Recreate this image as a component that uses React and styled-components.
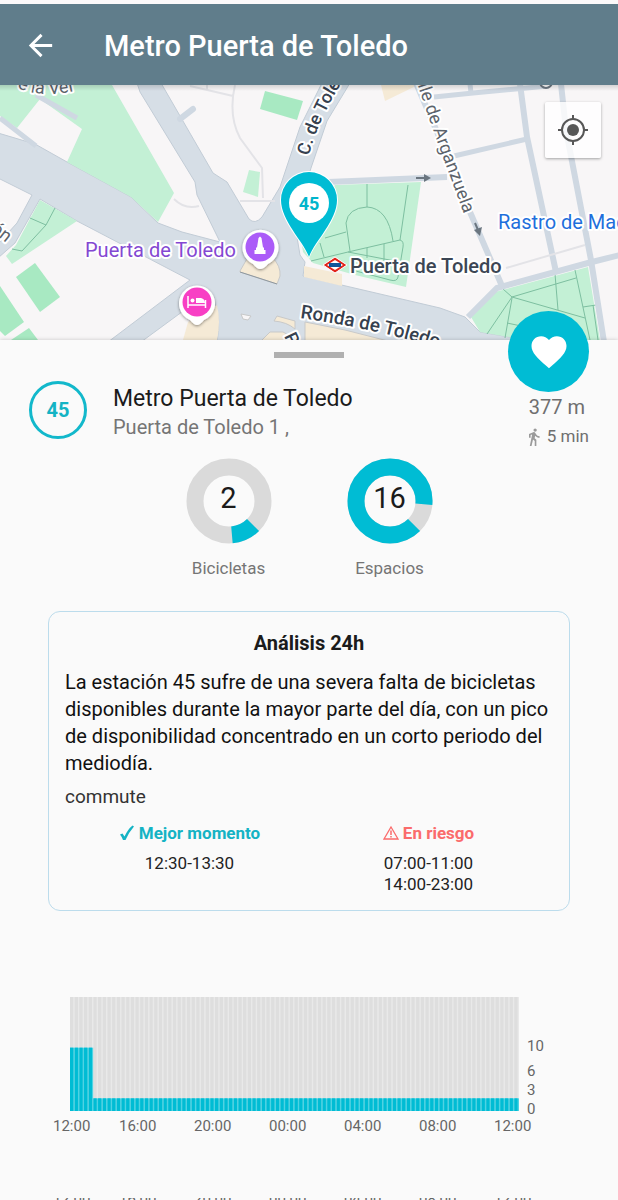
import React from 'react';
import styled, { createGlobalStyle } from 'styled-components';

const GlobalStyle = createGlobalStyle`
  * {
    box-sizing: border-box;
  }
  body {
    margin: 0;
    background: #fafafa;
    color: #1b1b1b;
    font-family: Roboto, "Liberation Sans", sans-serif;
    overflow: hidden;
  }
  h1, h2, h3, p {
    margin: 0;
    padding: 0;
  }
  button {
    border: 0;
    padding: 0;
    cursor: pointer;
  }
`;

const TOTAL_DOCKS = 18;

const analysis = {
  text: 'La estación 45 sufre de una severa falta de bicicletas disponibles durante la mayor parte del día, con un pico de disponibilidad concentrado en un corto periodo del mediodía.',
  tag: 'commute',
  best: ['12:30-13:30'],
  risk: ['07:00-11:00', '14:00-23:00'],
};

const history = Array.from({ length: 96 }, (_, i) => (i < 5 ? 10 : 2));
const hours = ['12:00', '16:00', '20:00', '00:00', '04:00', '08:00', '12:00'];

function CityMap() {
  return (
    <MapSvg viewBox="0 85 618 255" preserveAspectRatio="xMidYMid slice" aria-label="Mapa">
      <defs>
        <path id="toledo" d="M309 156 Q318 119 346 76" />
        <path id="ronda" d="M300 318 Q372 328 446 350" />
        <path id="arganzuela" d="M406 50 Q423 102 438 144 L464 214" />
        <path id="vera" d="M17 88 Q48 101 92 86" />
        <linearGradient id="shade" x1="0" y1="0" x2="0" y2="1">
          <stop offset="0" stopColor="#000" stopOpacity="0.14" />
          <stop offset="1" stopColor="#000" stopOpacity="0" />
        </linearGradient>
        <filter id="drop" x="-30%" y="-30%" width="160%" height="160%">
          <feDropShadow dx="0" dy="1" stdDeviation="1.5" floodOpacity="0.45" />
        </filter>
      </defs>

      <rect y="85" width="618" height="255" fill="#d6dee6" />

      {/* blocks */}
      <g fill="#f8f6f7" stroke="#c2ccd6" strokeWidth="1" strokeLinejoin="round">
        <path d="M-2 83H137L140 92L195 182L197 195L220 242L182 232L158 223L131 197L100 180L67 162L35 144L-2 133Z" />
        <path d="M161 83L213 173L227 182L249 219Q255 225 262 217L280 187L300 127L322 83Z" />
        <path d="M350 83L327 121L311 168L297 215L297 237L300 255L305 262L303 276L440 308L465 317L480 332L515 338L560 342H620V83Z" />
        <path d="M-2 178L32 195L17 223L-2 244Z" />
        <path d="M40 199L77 221L190 280L108 342H-2V258L15 243Z" />
        <path d="M141 342L190 306L213 298Q222 318 217 342Z" />
      </g>

      {/* pedestrian squares */}
      <g fill="#f5ead6">
        <path d="M381 85H418L385 101Z" />
        <path d="M304 266L342 274V286L304 277Z" />
        <path d="M188 322L217 305Q221 322 217 340H183Z" />
        <g stroke="#c8c9c9" strokeWidth="1">
          <path d="M240 271L248 257H272Q281 266 280 276L277 284L240 272Z" />
          <path d="M241 314L251 316L248 320L243 319Z" fill="#f8f6f7" />
          <path d="M277 316L295 321V329Q287 322 274 321Z" />
          <path d="M260 342L270 332H283Q290 335 292 342Z" />
          <path d="M305 322L345 330L392 342H305Z" />
        </g>
      </g>
      <path d="M240 272L277 284" stroke="#8e979e" strokeWidth="1" />

      {/* parks */}
      <g fill="#c3f0d5">
        <path d="M0 85H112L174 193L158 222L131 197L100 180L67 162L82 129L40 99L17 128L0 116Z" />
        <path d="M249 170L260 172L258 197L243 192Z" />
        <path d="M335 185L421 182L406 287L355 275L313 263L303 252L300 232Z" />
        <path d="M471 317L495 292L588 267L600 340H525L480 332Z" />
        <path d="M40 200L77 221L12 264L6 256L16 245Z" />
      </g>
      <g fill="#a8e9c2">
        <path d="M265 91L303 101L297 120L260 109Z" />
        <path d="M16 277L35 263L60 297L40 312Z" />
        <path d="M0 286L24 322L5 336L0 331Z" />
        <path d="M11 340L29 328L38 340Z" />
      </g>
      <g fill="none" stroke="#7dbfa0" strokeWidth="1">
        <path d="M367 184V207M408 185L400 240M350 251L346 223Q348 208 367 207Q388 208 393 241" />
        <path d="M311 261L348 252L400 240Q404 241 403 247L398 277Q397 282 390 280L352 270" />
        <path d="M325 238L346 232M320 243L324 257M367 248V258M384 244V261M348 252L400 262" />
        <path d="M503 289L512 297L576 278M512 297L487 334M512 298L505 338M512 297L585 318M555 274L558 310M575 270L590 340M583 307L596 305M593 305L598 340M507 323L545 331" />
        <path d="M30 218L46 225L55 208M46 225L22 251L12 249" />
      </g>

      {/* streets */}
      <g fill="none" stroke="#cfd8e2" strokeWidth="6">
        <path d="M328 182L447 177" />
        <path d="M416 83L447 155L470 212L502 286" />
        <path d="M434 97L473 93L548 86M470 84L471 93" strokeWidth="5" />
        <path d="M520 84L527 137L556 272" />
        <path d="M561 84L566 130L591 260L604 342" />
        <path d="M454 156L527 139" strokeWidth="5" />
        <path d="M620 255L588 263L497 288L468 317" />
        <path d="M36 95L77 118M0 118L36 146" strokeWidth="5" />
        <path d="M180 119L193 109" strokeLinecap="round" />
      </g>
      <g fill="none" stroke="#e3e3e7" strokeWidth="2">
        <path d="M190 86L233 96M207 85V90M235 85Q228 115 240 138L262 168L263 198M240 201H275M506 268L585 245M174 199Q185 210 199 206" />
      </g>
      <g fill="none" stroke="#6b7680" strokeWidth="2">
        <path d="M416 178H426M475 223L478 230" />
        <path d="M424 174L431 178L424 182ZM474 230L482 227L480 236Z" fill="#6b7680" stroke="none" />
        <circle cx="546" cy="82" r="6" fill="#fff" />
      </g>

      {/* street names */}
      <StreetName $size={18}><textPath href="#toledo">C. de Toledo</textPath></StreetName>
      <StreetName $size={19}><textPath href="#ronda">Ronda de Toledo</textPath></StreetName>
      <StreetName $minor $size={18}><textPath href="#arganzuela" startOffset="100%" textAnchor="end">alle de Arganzuela</textPath></StreetName>
      <StreetName $minor $size={18}><textPath href="#vera">e la Ver</textPath></StreetName>
      <StreetName $minor $size={18} transform="translate(6 243) rotate(38)" textAnchor="end">ón</StreetName>
      <StreetName $size={18} transform="translate(284 336) rotate(65)">P</StreetName>

      {/* places */}
      <PlaceName x="85" y="257" $color="#8448d2">Puerta de Toledo</PlaceName>
      <PlaceName x="498" y="229" $color="#1f6fdc">Rastro de Madrid</PlaceName>
      <PlaceName x="350" y="273" $color="#3c4654" $strong>Puerta de Toledo</PlaceName>
      <g>
        <path d="M323 265L335 257L347 265L335 273Z" fill="#e2231a" stroke="#fff" strokeWidth="1" />
        <path d="M327 265L335 260L343 265L335 270Z" fill="#fff" />
        <rect x="329" y="263" width="12" height="4" fill="#11579b" />
      </g>
      <g filter="url(#drop)">
        <path d="M260 269Q257 269 253 264A18 18 0 1 1 268 264Q264 269 260 269Z" fill="#fff" />
        <path d="M197 325Q194 325 190 320A18 18 0 1 1 204 320Q200 325 197 325Z" fill="#fff" />
      </g>
      <circle cx="260" cy="247" r="14.500" fill="#ab5cf8" />
      <path d="M258.500 238L260 236.500L261.500 238L263 247.500H264V250H265.500V254H254.500V250H256V247.500H257Z" fill="#fff" />
      <circle cx="197" cy="302" r="14.500" fill="#f83fc4" />
      <path d="M188 296V308M205.500 300V308M188 305H205.500" stroke="#fff" strokeWidth="1.500" />
      <circle cx="192.500" cy="300.500" r="2" fill="#fff" />
      <path d="M196 303V298H201Q205 299 205 303Z" fill="#fff" />

      {/* selected station */}
      <path d="M309 259C304 243 280 222 280 200A29 29 0 0 1 338 200C338 222 314 243 309 259Z" fill="#fff" />
      <path d="M309 257C304 242 281 221 281 200A28 28 0 0 1 337 200C337 221 314 242 309 257Z" fill="#00bcd4" />
      <circle cx="309" cy="203" r="20" fill="#fff" />
      <PinNumber x="309" y="210" textAnchor="middle">45</PinNumber>

      <rect y="85" width="618" height="6" fill="url(#shade)" />
    </MapSvg>
  );
}

// Ring starts at the lower right and grows clockwise
function Donut({ value, label }) {
  const length = 2 * Math.PI * 34;
  return (
    <DonutBox>
      <DonutRing>
        <svg width="86" height="86" viewBox="-43 -43 86 86" aria-hidden="true">
          <g fill="none" strokeWidth="17" transform="rotate(45)">
            <circle r="34" stroke="#dadada" />
            <circle r="34" stroke="#00bcd4" strokeDasharray={`${(length * value) / TOTAL_DOCKS} ${length}`} />
          </g>
        </svg>
        <DonutValue>{value}</DonutValue>
      </DonutRing>
      <DonutLabel>{label}</DonutLabel>
    </DonutBox>
  );
}

function HistoryChart() {
  return (
    <ChartRow>
      <Bars viewBox="0 0 96 18" preserveAspectRatio="none" aria-label="Bicicletas en 24h">
        <rect width="96" height="18" fill="#e9e9e9" />
        {history.map((v, i) => (
          <g key={i}>
            <rect x={i} y="0" width="0.7" height={TOTAL_DOCKS - v} fill="#dedede" />
            <rect x={i} y={TOTAL_DOCKS - v} width="1" height={v} fill="#4fd3e3" />
            <rect x={i} y={TOTAL_DOCKS - v} width="0.7" height={v} fill="#00bcd4" />
          </g>
        ))}
      </Bars>
      <Scale>
        <ScaleMark $gap={6}>10</ScaleMark>
        <ScaleMark>6</ScaleMark>
        <ScaleMark>3</ScaleMark>
        <ScaleMark>0</ScaleMark>
      </Scale>
    </ChartRow>
  );
}

function App() {
  return (
    <>
      <GlobalStyle />
      <Header>
        <BackButton aria-label="Atrás">
          <svg width="35" height="35" viewBox="0 0 24 24" fill="#fff">
            <path d="M20 11H7.830l5.590-5.590L12 4l-8 8 8 8 1.410-1.410L7.830 13H20v-2z" />
          </svg>
        </BackButton>
        <Title>Metro Puerta de Toledo</Title>
      </Header>

      <MapArea>
        <CityMap />
        <LocateButton aria-label="Mi ubicación">
          <svg width="32" height="32" viewBox="0 0 32 32" fill="none" stroke="#575757" strokeWidth="2">
            <circle cx="16" cy="16" r="11" />
            <circle cx="16" cy="16" r="6" fill="#575757" stroke="none" />
            <path d="M16 1v5M16 26v5M1 16h5M26 16h5" />
          </svg>
        </LocateButton>
      </MapArea>

      <Sheet>
        <FavButton aria-label="Favorita">
          <svg width="42" height="42" viewBox="0 0 24 24" fill="#fff">
            <path d="M12 21.350l-1.450-1.320C5.400 15.360 2 12.280 2 8.500 2 5.420 4.420 3 7.500 3c1.740 0 3.410.810 4.500 2.090C13.090 3.810 14.760 3 16.500 3 19.580 3 22 5.420 22 8.500c0 3.780-3.400 6.860-8.550 11.540L12 21.350z" />
          </svg>
        </FavButton>
        <Handle />
        <StationRow>
          <StationNumber>45</StationNumber>
          <StationText>
            <StationName>Metro Puerta de Toledo</StationName>
            <Address>Puerta de Toledo 1 ,</Address>
          </StationText>
          <Distance>
            <Meters>377 m</Meters>
            <Walk>
              <svg width="18" height="18" viewBox="4 1 22 22" fill="#9a9a9a" aria-hidden="true">
                <path d="M13.500 5.500c1.100 0 2-.9 2-2s-.9-2-2-2-2 .9-2 2 .9 2 2 2zM9.800 8.900L7 23h2.100l1.800-8 2.100 2v6h2v-7.500l-2.100-2 .6-3C14.800 12 16.800 13 19 13v-2c-1.900 0-3.500-1-4.300-2.400l-1-1.600c-.4-.6-1-1-1.700-1-.3 0-.5.1-.8.1L6 8.300V13h2V9.600l1.800-.7" transform="translate(-2 0)" />
              </svg>
              5 min
            </Walk>
          </Distance>
        </StationRow>

        <Donuts>
          <Donut value={2} label="Bicicletas" />
          <Donut value={16} label="Espacios" />
        </Donuts>

        <Card>
          <CardTitle>Análisis 24h</CardTitle>
          <Summary>{analysis.text}</Summary>
          <Tag>{analysis.tag}</Tag>
          <Moments>
            <div>
              <MomentTitle $color="#14b3c4">
                <svg width="16" height="16" viewBox="0 0 16 16" aria-hidden="true">
                  <path d="M1 9.500L3.500 8.500L5.500 11.500Q9 4 13.500 0.500L15 1.500Q10 7 6.500 15H4Q3 12 1 9.500Z" fill="currentColor" />
                </svg>
                Mejor momento
              </MomentTitle>
              {analysis.best.map((t) => <MomentTime key={t}>{t}</MomentTime>)}
            </div>
            <div>
              <MomentTitle $color="#fa6b6b">
                <svg width="16" height="16" viewBox="0 0 16 16" fill="none" stroke="currentColor" aria-hidden="true">
                  <path d="M8 2L15 14H1Z" strokeWidth="1.300" />
                  <path d="M8 5.500V10M8 11V12.500" strokeWidth="1.500" />
                </svg>
                En riesgo
              </MomentTitle>
              {analysis.risk.map((t) => <MomentTime key={t}>{t}</MomentTime>)}
            </div>
          </Moments>
        </Card>

        <HistoryChart />
        <Hours>
          {hours.map((h, i) => <span key={i}>{h}</span>)}
        </Hours>
        <Hours $cut>
          {hours.map((h, i) => <span key={i}>{h}</span>)}
        </Hours>
      </Sheet>
    </>
  );
}

const Header = styled.header`
  display: flex;
  align-items: center;
  height: 85px;
  padding: 2px 0 0 23px;
  border-top: 4px solid #fcf9fa;
  background: #607d8b;
`;

const BackButton = styled.button`
  display: flex;
  margin-right: 46px;
  background: transparent;
`;

const Title = styled.h1`
  color: #fff;
  font-size: 29px;
  font-weight: 500;
  line-height: 34px;
`;

const MapArea = styled.section`
  position: relative;
  height: 255px;
`;

const MapSvg = styled.svg`
  display: block;
  width: 100%;
  height: 100%;
`;

const StreetName = styled.text`
  fill: ${(props) => (props.$minor ? '#5c636b' : '#36414f')};
  font-size: ${(props) => props.$size}px;
  font-weight: ${(props) => (props.$minor ? 400 : 500)};
  stroke: #fff;
  stroke-width: 4px;
  stroke-linejoin: round;
  paint-order: stroke;
`;

const PlaceName = styled.text`
  fill: ${(props) => props.$color};
  font-size: 20px;
  font-weight: ${(props) => (props.$strong ? 500 : 400)};
  stroke: #fff;
  stroke-width: 4px;
  stroke-linejoin: round;
  paint-order: stroke;
`;

const PinNumber = styled.text`
  fill: #00b5cc;
  font-size: 18px;
  font-weight: 700;
`;

const LocateButton = styled.button`
  position: absolute;
  top: 17px;
  right: 17px;
  display: flex;
  align-items: center;
  justify-content: center;
  width: 56px;
  height: 56px;
  border-radius: 2px;
  background: rgba(255, 255, 255, 0.8);
  box-shadow: 0 1px 3px rgba(0, 0, 0, 0.35);
`;

const Sheet = styled.main`
  position: relative;
  padding-top: 12px;
  background: #fafafa;
  box-shadow: 0 0 4px rgba(0, 0, 0, 0.2);
`;

const FavButton = styled.button`
  position: absolute;
  top: -29px;
  right: 29px;
  display: flex;
  align-items: center;
  justify-content: center;
  width: 81px;
  height: 81px;
  border-radius: 50%;
  background: #00bcd4;
`;

const Handle = styled.div`
  width: 70px;
  height: 6px;
  margin: 0 auto;
  background: #b0b0b0;
`;

const StationRow = styled.section`
  display: flex;
  align-items: flex-start;
  margin-top: 23px;
  padding: 0 29px;
`;

const StationNumber = styled.div`
  display: flex;
  align-items: center;
  justify-content: center;
  width: 58px;
  height: 58px;
  border: 3px solid #12b8cb;
  border-radius: 50%;
  color: #14b3c4;
  font-size: 20px;
  font-weight: 700;
`;

const StationText = styled.div`
  flex: 1;
  margin: 3px 0 0 26px;
  line-height: 29px;
`;

const StationName = styled.h2`
  font-size: 23px;
  font-weight: 400;
`;

const Address = styled.p`
  color: #757575;
  font-size: 20px;
`;

const Distance = styled.div`
  margin-top: 12px;
  color: #6f6f6f;
  line-height: 29px;
`;

const Meters = styled.p`
  font-size: 20px;
`;

const Walk = styled.p`
  display: flex;
  align-items: center;
  font-size: 17px;
`;

const Donuts = styled.section`
  display: flex;
  justify-content: center;
  gap: 75px;
  margin-top: 7px;
`;

const DonutBox = styled.div`
  display: flex;
  flex-direction: column;
  align-items: center;
  width: 86px;
`;

const DonutRing = styled.div`
  display: grid;
  height: 86px;
  > * {
    grid-area: 1 / 1;
  }
`;

const DonutValue = styled.span`
  place-self: center;
  padding-bottom: 6px;
  font-size: 29px;
`;

const DonutLabel = styled.p`
  margin-top: 14px;
  color: #757575;
  font-size: 17px;
  line-height: 20px;
`;

const Card = styled.section`
  margin: 33px 48px 0;
  padding: 18px 16px 15px;
  border: 1px solid #bcdcec;
  border-radius: 12px;
`;

const CardTitle = styled.h3`
  font-size: 20px;
  font-weight: 700;
  line-height: 26px;
  text-align: center;
`;

const Summary = styled.p`
  margin-top: 13px;
  color: #111;
  font-size: 20px;
  line-height: 27px;
`;

const Tag = styled.p`
  margin-top: 10px;
  color: #333;
  font-size: 19px;
  line-height: 20px;
`;

const Moments = styled.div`
  display: grid;
  grid-template-columns: 1fr 1fr;
  margin: 15px 5px 0;
  text-align: center;
`;

const MomentTitle = styled.h3`
  display: flex;
  align-items: center;
  justify-content: center;
  gap: 4px;
  margin-bottom: 9px;
  color: ${(props) => props.$color};
  font-size: 17px;
  font-weight: 700;
  line-height: 22px;
`;

const MomentTime = styled.p`
  color: #222;
  font-size: 17px;
  line-height: 21px;
`;

const ChartRow = styled.div`
  display: flex;
  height: 114px;
  margin: 86px 0 0 70px;
`;

const Bars = styled.svg`
  flex: 1;
  height: 114px;
  min-width: 0;
`;

const Scale = styled.div`
  display: flex;
  flex-direction: column;
  justify-content: flex-end;
  width: 99px;
  margin-bottom: -8px;
  padding-left: 8px;
  color: #666;
  font-size: 15px;
  line-height: 19px;
`;

const ScaleMark = styled.span`
  margin-bottom: ${(props) => props.$gap || 0}px;
`;

// $cut leaves only a sliver of the row, like one scrolled behind the edge
const Hours = styled.div`
  display: grid;
  grid-template-columns: 66fr repeat(5, 75fr) 38px;
  height: ${(props) => (props.$cut ? '2px' : '20px')};
  margin: ${(props) => (props.$cut ? '62px' : '5px')} 86px 0 53px;
  overflow: hidden;
  color: #666;
  font-size: 15px;
  line-height: ${(props) => (props.$cut ? '2px' : '20px')};
`;

export default App;
